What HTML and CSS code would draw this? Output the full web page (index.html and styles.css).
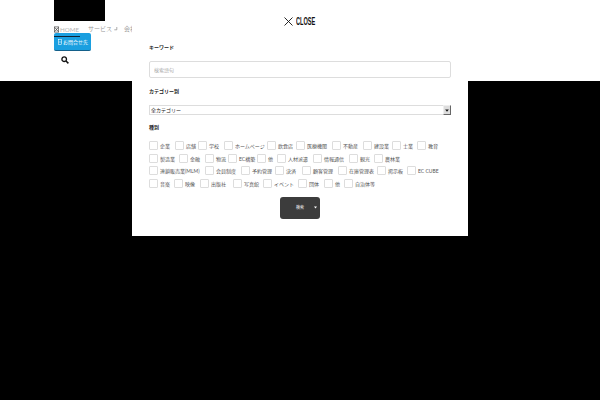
FILE: index.html
```html
<!DOCTYPE html>
<html lang="ja">
<head>
<meta charset="utf-8">
<title>検索</title>
<link rel="stylesheet" href="styles.css">
</head>
<body>
<header class="site-header">
  <div class="logo"></div>
  <nav class="nav">
    <a class="nav-home"><svg class="tofu" viewBox="0 0 6 7"><rect x="0.4" y="0.4" width="5.2" height="6.2" fill="#fff" stroke="#444" stroke-width="0.8"/><path d="M1 1.2 5 5.8M5 1.2 1 5.8" stroke="#444" stroke-width="0.9"/></svg>HOME</a>
    <a class="nav-link nav-service">サービス</a>
    <svg class="nav-caret" viewBox="0 0 5 4"><path d="M2.8 0v2.8H.3" fill="none" stroke="#888" stroke-width=".7"/></svg>
    <a class="nav-link">会社</a>
    <div class="dropdown">
      <svg class="drop-icon" viewBox="0 0 5 7"><rect x="0.4" y="0.4" width="4.2" height="6.2" fill="none" stroke="#fff" stroke-width="0.7"/><path d="M.6 3.5h3.8" stroke="#fff" stroke-width=".7"/></svg>
      <span>お問合せ先</span>
    </div>
  </nav>
  <div class="search-wrap">
    <svg class="search-icon" viewBox="0 0 8 8"><circle cx="3.2" cy="3.2" r="2.3" fill="none" stroke="#111" stroke-width="1.3"/><path d="M5 5 7.4 7.4" stroke="#111" stroke-width="1.5"/></svg>
  </div>
</header>

<section class="modal">
  <div class="close">
    <svg class="close-x" viewBox="0 0 9 9"><path d="M.5.5l8 8M8.5.5l-8 8" stroke="#111" stroke-width=".9" fill="none"/></svg>
    <span class="close-text">CLOSE</span>
  </div>
  <form class="form">
    <label class="title t1">キーワード</label>
    <input class="text-input" type="text" placeholder="検索語句">
    <label class="title t2">カテゴリー別</label>
    <div class="select-wrap">
      <select class="select"><option>全カテゴリー</option></select>
      <span class="select-btn"><svg viewBox="0 0 5 4"><path d="M0 .5h5L2.5 3.8z" fill="#111"/></svg></span>
    </div>
    <label class="title t3">種別</label>
    <div class="checks">
      <div class="row">
        <label class="check"><i></i><span class="w11">企業</span></label>
        <label class="check"><i></i><span class="w8">店舗</span></label>
        <label class="check"><i></i><span class="w11">学校</span></label>
        <label class="check"><i></i><span class="w28">ホームページ</span></label>
        <label class="check"><i></i><span class="w14">飲食店</span></label>
        <label class="check"><i></i><span class="w21">医療機関</span></label>
        <label class="check"><i></i><span class="w16">不動産</span></label>
        <label class="check"><i></i><span class="w14">建設業</span></label>
        <label class="check"><i></i><span class="w10">士業</span></label>
        <label class="check"><i></i><span class="w10">教育</span></label>
      </div>
      <div class="row">
        <label class="check"><i></i><span class="w15">製造業</span></label>
        <label class="check"><i></i><span class="w11">金融</span></label>
        <label class="check"><i></i><span class="w8">物流</span></label>
        <label class="check"><i></i><span class="w14">EC構築</span></label>
        <label class="check"><i></i><span class="w5">他</span></label>
        <label class="check"><i></i><span class="w21">人材派遣</span></label>
        <label class="check"><i></i><span class="w21">情報通信</span></label>
        <label class="check"><i></i><span class="w10">観光</span></label>
        <label class="check"><i></i><span class="w15">農林業</span></label>
      </div>
      <div class="row">
        <label class="check"><i></i><span class="w41">連鎖販売業(MLM)</span></label>
        <label class="check"><i></i><span class="w21">会員制度</span></label>
        <label class="check"><i></i><span class="w19">予約管理</span></label>
        <label class="check"><i></i><span class="w12">決済</span></label>
        <label class="check"><i></i><span class="w21">顧客管理</span></label>
        <label class="check"><i></i><span class="w24">在庫管理表</span></label>
        <label class="check"><i></i><span class="w15">掲示板</span></label>
        <label class="check"><i></i><span class="w21">EC CUBE</span></label>
      </div>
      <div class="row">
        <label class="check"><i></i><span class="w10">音楽</span></label>
        <label class="check"><i></i><span class="w11">映像</span></label>
        <label class="check"><i></i><span class="w18">出版社</span></label>
        <label class="check"><i></i><span class="w15">写真館</span></label>
        <label class="check"><i></i><span class="w20">イベント</span></label>
        <label class="check"><i></i><span class="w11">団体</span></label>
        <label class="check"><i></i><span class="w5">他</span></label>
        <label class="check"><i></i><span class="w19">自治体等</span></label>
      </div>
    </div>
    <div class="submit-row">
      <button class="submit" type="button"><span>検索</span><svg class="submit-arrow" viewBox="0 0 3 3"><path d="M0 .5h3L1.5 2.5z" fill="#fff"/></svg></button>
    </div>
  </form>
</section>
</body>
</html>
```
FILE: styles.css
```css
* { box-sizing: border-box; }
html, body { margin: 0; padding: 0; }
body {
  width: 600px;
  height: 400px;
  overflow: hidden;
  background: #000;
  position: relative;
  font-family: Lato, "Noto Sans CJK JP", sans-serif;
  color: #444;
}
.site-header {
  height: 81px;
  background: #fff;
  padding-left: 54px;
}
.logo { width: 51px; height: 21px; background: #000; }
.nav {
  position: relative;
  display: flex;
  align-items: center;
  height: 12px;
  margin-top: 2px;
}
.nav-home {
  display: flex;
  align-items: center;
  gap: 1px;
  width: 34px;
  font-size: 6.2px;
  color: #b4b4b4;
}
.tofu { width: 5px; height: 7px; }
.nav-link { font-size: 6px; color: #999; line-height: 8px; }
.nav-service { width: 24px; }
.nav-caret { width: 5px; height: 4px; margin: 0 5px 0 2px; }
.dropdown {
  position: absolute;
  left: 0;
  top: 10px;
  width: 37px;
  height: 18px;
  display: flex;
  align-items: center;
  gap: 1px;
  padding-left: 4px;
  background: #1a9fe0;
  border-radius: 2px;
  border-bottom: 1px solid #14608a;
  color: #fff;
  font-size: 5px;
}
.dropdown::before {
  content: "";
  position: absolute;
  left: 0;
  top: 3px;
  width: 26px;
  height: 1px;
  background: #123;
}
.drop-icon { width: 4px; height: 6px; }
.search-wrap {
  margin-top: 21px;
  width: 22px;
  display: flex;
  justify-content: center;
}
.search-icon { width: 8px; height: 8px; }
.modal {
  position: absolute;
  left: 132px;
  top: 0;
  width: 336px;
  height: 236px;
  background: #fff;
  padding: 15px 17px 0;
}
.close {
  display: flex;
  justify-content: flex-start;
  align-items: center;
  gap: 3px;
  height: 12px;
  padding-left: 135px;
  font-family: "Liberation Sans", sans-serif;
  font-size: 10px;
  font-weight: 700;
  color: #111;
}
.close-text { display: inline-block; transform: scaleX(.56); transform-origin: left center; }
.close-x { width: 9px; height: 9px; }
.form { display: flex; flex-direction: column; }
.title {
  font-size: 5px;
  line-height: 8px;
  font-weight: 700;
  color: #222;
}
.t1 { margin-top: 16px; }
.t2 { margin-top: 9px; }
.t3 { margin-top: 8px; }
.text-input {
  margin-top: 10px;
  width: 302px;
  height: 17px;
  border: 1px solid #ddd;
  border-radius: 2px;
  padding: 0 4px;
  font-family: inherit;
  font-size: 5px;
  background: #fff;
}
.text-input::placeholder { color: #aaa; }
.select-wrap {
  position: relative;
  margin-top: 10px;
  width: 302px;
  height: 10px;
}
.select {
  display: block;
  width: 100%;
  height: 100%;
  appearance: none;
  border: 1px solid #ddd;
  border-radius: 0;
  padding: 0 1px;
  background: #fff;
  font-family: inherit;
  font-size: 5px;
  color: #222;
}
.select-btn {
  position: absolute;
  right: 0;
  top: 0;
  width: 8px;
  height: 10px;
  display: flex;
  align-items: center;
  justify-content: center;
  background: #ddd;
  border: 1px solid;
  border-color: #eee #666 #666 #eee;
}
.select-btn svg { width: 4px; height: 3px; }
.checks { margin-top: 10px; display: flex; flex-direction: column; gap: 3px; }
.row { display: flex; gap: 4px; height: 9.6px; }
.check {
  display: flex;
  align-items: center;
  gap: 2px;
  font-size: 5px;
  color: #555;
  white-space: nowrap;
}
.check i {
  display: block;
  width: 9px;
  height: 9px;
  border: 1px solid #ddd;
  border-radius: 1px;
  background: #fff;
}
.check span { display: block; }
.w5 { width: 5px; }
.w8 { width: 8px; }
.w10 { width: 10px; }
.w11 { width: 11px; }
.w12 { width: 12px; }
.w14 { width: 14px; }
.w15 { width: 15px; }
.w16 { width: 16px; }
.w18 { width: 18px; }
.w19 { width: 19px; }
.w20 { width: 20px; }
.w21 { width: 21px; }
.w24 { width: 24px; }
.w28 { width: 28px; }
.w41 { width: 41px; }
.submit-row { display: flex; justify-content: center; margin-top: 9px; }
.submit {
  position: relative;
  width: 40px;
  height: 22px;
  border: 0;
  border-radius: 3px;
  background: #3c3c3c;
  color: #fff;
  font-family: inherit;
  font-size: 4px;
  line-height: 20px;
  padding: 0;
}
.submit-arrow {
  position: absolute;
  right: 3px;
  top: 9px;
  width: 3px;
  height: 3px;
}
```
